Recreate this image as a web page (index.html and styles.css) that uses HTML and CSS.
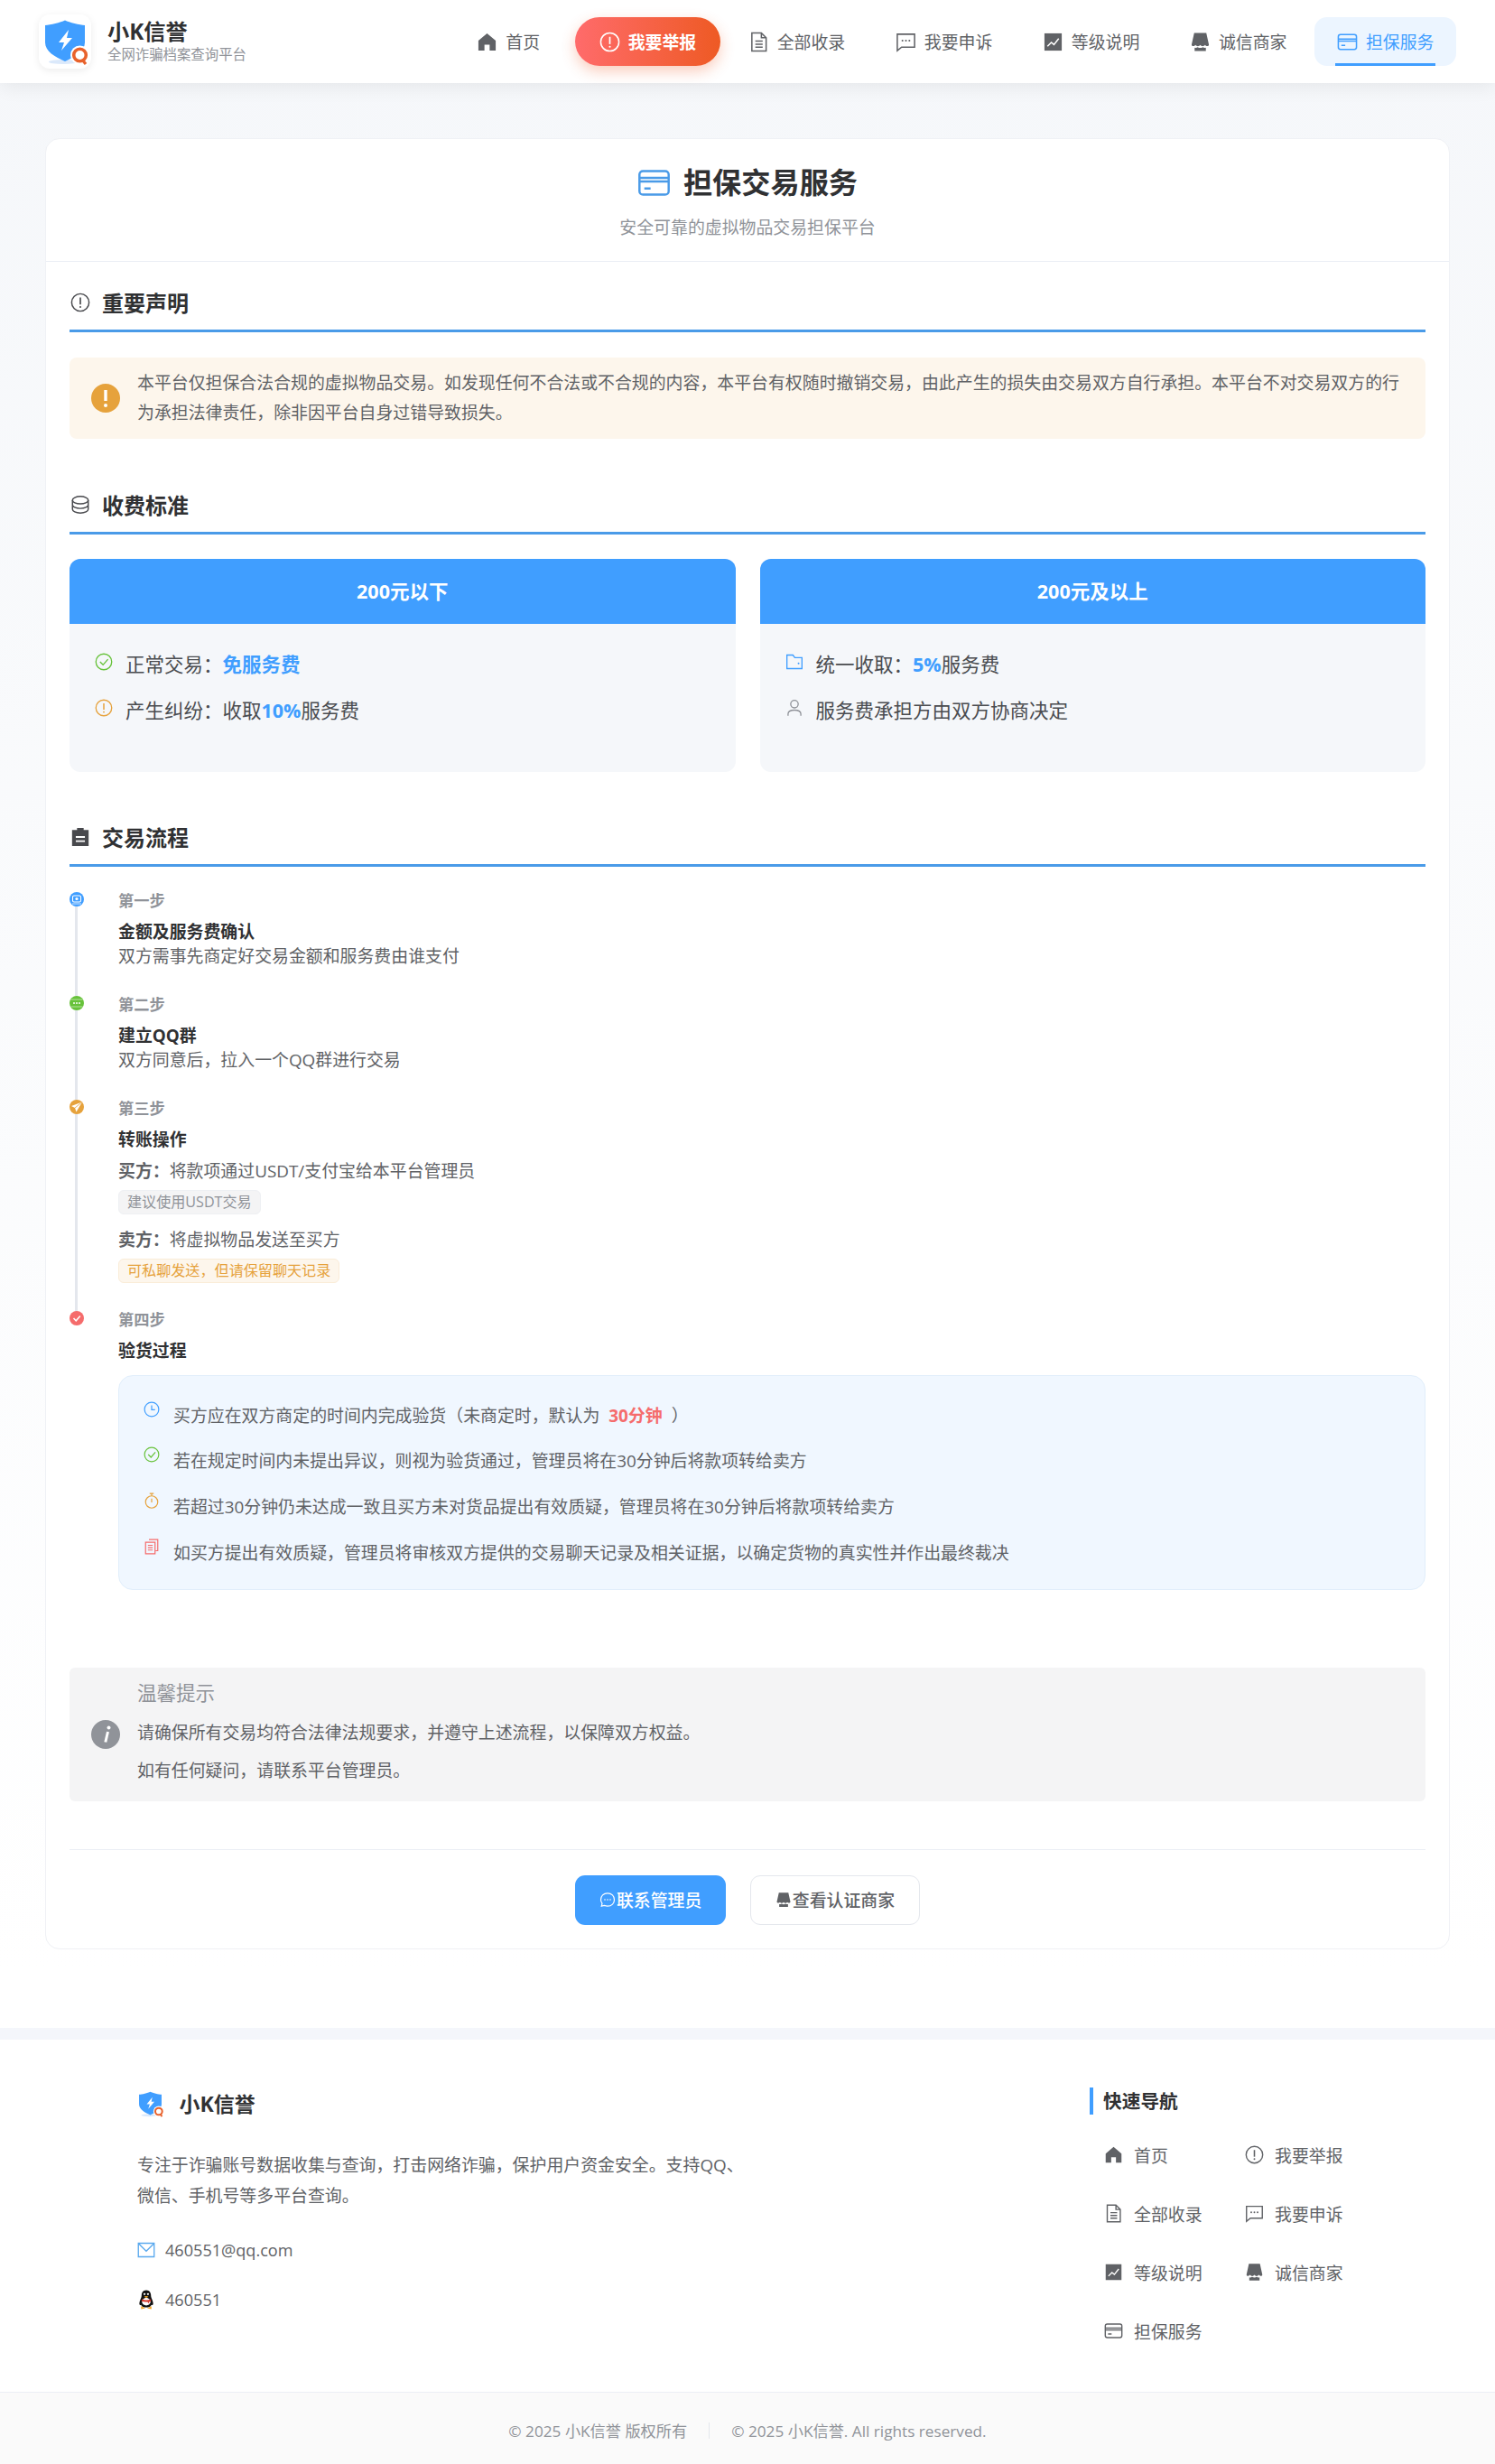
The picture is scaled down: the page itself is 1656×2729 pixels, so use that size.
FILE: index.html
```html
<!DOCTYPE html>
<html lang="zh-CN">
<head>
    <meta charset="UTF-8">
    <meta name="viewport" content="width=device-width, initial-scale=1.0">
    <title>担保交易服务 - 小K信誉</title>
    <link rel="stylesheet" href="styles.css">
</head>
<body>
    <svg class="sprite" width="0" height="0" aria-hidden="true">
        <defs>
            <symbol id="i-shield" viewBox="0 0 58 60">
                <ellipse cx="27" cy="52.5" rx="16" ry="2.5" fill="#dbe9fb"/>
                <path d="M29 6.5 C34 9 45 11.5 51 12 V31 C51 41 40 47 29 52 C18 47 7 41 7 31 V12 C13 11.5 24 9 29 6.5 Z" fill="#409eff"/>
                <path d="M33 17 L22 31 H28 L25 40 L37 26 H31 Z" fill="#fff"/>
                <circle cx="45.5" cy="45" r="10.5" fill="#fff"/>
                <circle cx="45.5" cy="45" r="6.8" fill="none" stroke="#e8622c" stroke-width="3.6"/>
                <path d="M48 50 L52 55" stroke="#e8622c" stroke-width="3.2"/>
            </symbol>
            <symbol id="i-home" viewBox="0 0 24 24">
                <path d="M12 2 L22 10.5 V22 H15 V15 H9 V22 H2 V10.5 Z" fill="currentColor"/>
            </symbol>
            <symbol id="i-alert" viewBox="0 0 24 24">
                <circle cx="12" cy="12" r="10.5" fill="none" stroke="currentColor" stroke-width="1.6"/>
                <path d="M12 6 V14.5" stroke="currentColor" stroke-width="1.8"/>
                <circle cx="12" cy="17.5" r="1.1" fill="currentColor"/>
            </symbol>
            <symbol id="i-doc" viewBox="0 0 24 24">
                <path d="M4 1.5 H15 L20.5 7 V22.5 H4 Z M15 1.5 V7 H20.5 M8 11 H16.5 M8 14.5 H16.5 M8 18 H16.5" fill="none" stroke="currentColor" stroke-width="1.6"/>
            </symbol>
            <symbol id="i-chat" viewBox="0 0 24 24">
                <path d="M2 3 H22 V18 H7 L2 22 Z" fill="none" stroke="currentColor" stroke-width="1.6"/>
                <circle cx="8" cy="10.5" r="1.1" fill="currentColor"/>
                <circle cx="12" cy="10.5" r="1.1" fill="currentColor"/>
                <circle cx="16" cy="10.5" r="1.1" fill="currentColor"/>
            </symbol>
            <symbol id="i-chart" viewBox="0 0 24 24">
                <path d="M2 2 H22 V22 H2 Z" fill="currentColor"/>
                <path d="M5.5 17 L10 12.5 L13 15 L18.5 8" fill="none" stroke="#fff" stroke-width="1.6"/>
            </symbol>
            <symbol id="i-store" viewBox="0 0 24 24">
                <path d="M5 1.5 H19 L22 15 C22 17 19 17.5 17.5 15.5 C16 17.5 13.5 17.5 12 15.5 C10.5 17.5 8 17.5 6.5 15.5 C5 17.5 2 17 2 15 Z" fill="currentColor"/>
                <path d="M5.5 18.5 C7 19 8 18.6 9 18 C11 19.2 13 19.2 15 18 C16 18.6 17 19 18.5 18.5 V22.5 H5.5 Z" fill="currentColor"/>
            </symbol>
            <symbol id="i-card" viewBox="0 0 24 24">
                <rect x="1.5" y="3.5" width="21" height="17" rx="2.5" fill="none" stroke="currentColor" stroke-width="1.6"/>
                <path d="M1.5 8.5 H22.5 M1.5 11 H22.5 M5 16 H9.5" fill="none" stroke="currentColor" stroke-width="1.6"/>
            </symbol>
            <symbol id="i-coins" viewBox="0 0 24 24">
                <ellipse cx="12" cy="6.5" rx="9.5" ry="4.5" fill="none" stroke="currentColor" stroke-width="1.6"/>
                <path d="M2.5 6.5 V17.5 C2.5 20 6.5 22 12 22 S21.5 20 21.5 17.5 V6.5 M2.5 12 C2.5 14.5 6.5 16.5 12 16.5 S21.5 14.5 21.5 12" fill="none" stroke="currentColor" stroke-width="1.6"/>
            </symbol>
            <symbol id="i-clipboard" viewBox="0 0 24 24">
                <path d="M2 3.5 H8 V1 H16 V3.5 H22 V23 H2 Z" fill="currentColor"/>
                <path d="M6.5 11 H17.5 V13 H6.5 Z M6.5 16 H17.5 V18 H6.5 Z" fill="#fff"/>
            </symbol>
            <symbol id="i-check" viewBox="0 0 24 24">
                <circle cx="12" cy="12" r="10.5" fill="none" stroke="currentColor" stroke-width="1.6"/>
                <path d="M7 12 L11 16 L17.5 8.5" fill="none" stroke="currentColor" stroke-width="1.6"/>
            </symbol>
            <symbol id="i-wallet" viewBox="0 0 24 24">
                <path d="M2 3 H10 L12.5 6.5 H22 V21 H2 Z" fill="none" stroke="currentColor" stroke-width="1.6"/>
                <circle cx="17.5" cy="14" r="1.2" fill="currentColor"/>
            </symbol>
            <symbol id="i-user" viewBox="0 0 24 24">
                <circle cx="12" cy="7" r="5" fill="none" stroke="currentColor" stroke-width="1.6"/>
                <path d="M3.5 22.5 V20 C3.5 16.5 7 15 12 15 S20.5 16.5 20.5 20 V22.5" fill="none" stroke="currentColor" stroke-width="1.6"/>
            </symbol>
            <symbol id="i-clock" viewBox="0 0 24 24">
                <circle cx="12" cy="12" r="10.5" fill="none" stroke="currentColor" stroke-width="1.6"/>
                <path d="M12 6 V12.5 H17" fill="none" stroke="currentColor" stroke-width="1.6"/>
            </symbol>
            <symbol id="i-timer" viewBox="0 0 24 24">
                <circle cx="12" cy="14" r="9" fill="none" stroke="currentColor" stroke-width="1.6"/>
                <path d="M9 1.5 H15 M12 1.5 V5 M12 9 V14.5" fill="none" stroke="currentColor" stroke-width="1.6"/>
            </symbol>
            <symbol id="i-copy" viewBox="0 0 24 24">
                <path d="M8 1.5 H21 V18 H18 M3 5.5 H17 V22.5 H3 Z M6.5 10 H13.5 M6.5 13.5 H13.5 M6.5 17 H13.5" fill="none" stroke="currentColor" stroke-width="1.6"/>
            </symbol>
            <symbol id="i-mail" viewBox="0 0 24 24">
                <path d="M1.5 3 H22.5 V21 H1.5 Z M2 3.5 L12 13.5 L22 3.5" fill="none" stroke="currentColor" stroke-width="1.6"/>
            </symbol>
        </defs>
    </svg>

    <header class="site-header">
        <a class="brand">
            <span class="brand-logo"><svg class="logo-svg"><use href="#i-shield"/></svg></span>
            <span class="brand-text">
                <span class="brand-name">小K信誉</span>
                <span class="brand-sub">全网诈骗档案查询平台</span>
            </span>
        </a>
        <nav class="main-nav">
            <a class="nav-item"><svg class="nav-icon"><use href="#i-home"/></svg>首页</a>
            <a class="nav-item nav-report"><svg class="nav-icon"><use href="#i-alert"/></svg>我要举报</a>
            <a class="nav-item"><svg class="nav-icon"><use href="#i-doc"/></svg>全部收录</a>
            <a class="nav-item"><svg class="nav-icon"><use href="#i-chat"/></svg>我要申诉</a>
            <a class="nav-item"><svg class="nav-icon"><use href="#i-chart"/></svg>等级说明</a>
            <a class="nav-item"><svg class="nav-icon"><use href="#i-store"/></svg>诚信商家</a>
            <a class="nav-item nav-active"><svg class="nav-icon"><use href="#i-card"/></svg>担保服务</a>
        </nav>
    </header>

    <main class="page">
        <div class="card">
            <div class="card-head">
                <h1 class="page-title"><svg class="title-icon"><use href="#i-card"/></svg>担保交易服务</h1>
                <p class="page-sub">安全可靠的虚拟物品交易担保平台</p>
            </div>

            <div class="card-body">
                <section class="section">
                    <h2 class="section-title"><svg class="section-icon"><use href="#i-alert"/></svg>重要声明</h2>
                    <div class="notice">
                        <svg class="notice-icon" viewBox="0 0 32 32"><circle cx="16" cy="16" r="16" fill="#e6a23c"/><path d="M16 7 V19" stroke="#fff" stroke-width="3.4"/><circle cx="16" cy="24" r="2" fill="#fff"/></svg>
                        <p>本平台仅担保合法合规的虚拟物品交易。如发现任何不合法或不合规的内容，本平台有权随时撤销交易，由此产生的损失由交易双方自行承担。本平台不对交易双方的行为承担法律责任，除非因平台自身过错导致损失。</p>
                    </div>
                </section>

                <section class="section section-next">
                    <h2 class="section-title"><svg class="section-icon"><use href="#i-coins"/></svg>收费标准</h2>
                    <div class="fee-grid">
                        <div class="fee-card">
                            <div class="fee-head">200元以下</div>
                            <ul class="fee-list">
                                <li><svg class="fee-icon green"><use href="#i-check"/></svg><span>正常交易：<b>免服务费</b></span></li>
                                <li><svg class="fee-icon orange"><use href="#i-alert"/></svg><span>产生纠纷：收取<b>10%</b>服务费</span></li>
                            </ul>
                        </div>
                        <div class="fee-card">
                            <div class="fee-head">200元及以上</div>
                            <ul class="fee-list">
                                <li><svg class="fee-icon blue"><use href="#i-wallet"/></svg><span>统一收取：<b>5%</b>服务费</span></li>
                                <li><svg class="fee-icon grey"><use href="#i-user"/></svg><span>服务费承担方由双方协商决定</span></li>
                            </ul>
                        </div>
                    </div>
                </section>

                <section class="section section-next">
                    <h2 class="section-title"><svg class="section-icon"><use href="#i-clipboard"/></svg>交易流程</h2>
                    <div class="timeline">
                        <div class="step">
                            <svg class="dot" viewBox="0 0 16 16"><circle cx="8" cy="8" r="8" fill="#409eff"/><rect x="3.5" y="4" width="9" height="7" rx="1.5" fill="none" stroke="#fff" stroke-width="1.1"/><circle cx="8" cy="7.5" r="1.6" fill="#fff"/><path d="M3 13 H13" stroke="#cfe5ff" stroke-width="1"/></svg>
                            <div class="step-label">第一步</div>
                            <div class="step-title">金额及服务费确认</div>
                            <div class="step-desc">双方需事先商定好交易金额和服务费由谁支付</div>
                        </div>
                        <div class="step">
                            <svg class="dot" viewBox="0 0 16 16"><circle cx="8" cy="8" r="8" fill="#67c23a"/><path d="M1.5 4 H14.5 M1.5 12 H14.5" stroke="#b5e29c" stroke-width="1"/><circle cx="5" cy="8" r="1" fill="#fff"/><circle cx="8" cy="8" r="1" fill="#fff"/><circle cx="11" cy="8" r="1" fill="#fff"/></svg>
                            <div class="step-label">第二步</div>
                            <div class="step-title">建立QQ群</div>
                            <div class="step-desc">双方同意后，拉入一个QQ群进行交易</div>
                        </div>
                        <div class="step">
                            <svg class="dot" viewBox="0 0 16 16"><circle cx="8" cy="8" r="8" fill="#e6a23c"/><path d="M14 2.5 L2 7 L6 9 L7.5 13.5 Z" fill="#fff"/><path d="M6 9 L14 2.5" stroke="#e6a23c" stroke-width="0.8"/></svg>
                            <div class="step-label">第三步</div>
                            <div class="step-title">转账操作</div>
                            <div class="party"><b>买方：</b>将款项通过USDT/支付宝给本平台管理员</div>
                            <div class="tag">建议使用USDT交易</div>
                            <div class="party party-next"><b>卖方：</b>将虚拟物品发送至买方</div>
                            <div class="tag tag-warn">可私聊发送，但请保留聊天记录</div>
                        </div>
                        <div class="step step-last">
                            <svg class="dot" viewBox="0 0 16 16"><circle cx="8" cy="8" r="8" fill="#f56c6c"/><path d="M4.5 8 L7.2 10.8 L11.8 5.5" fill="none" stroke="#fff" stroke-width="1.5"/></svg>
                            <div class="step-label">第四步</div>
                            <div class="step-title">验货过程</div>
                            <ul class="check-box">
                                <li><svg class="check-icon blue"><use href="#i-clock"/></svg><span>买方应在双方商定的时间内完成验货（未商定时，默认为<strong>30分钟</strong>）</span></li>
                                <li><svg class="check-icon green"><use href="#i-check"/></svg><span>若在规定时间内未提出异议，则视为验货通过，管理员将在30分钟后将款项转给卖方</span></li>
                                <li><svg class="check-icon orange"><use href="#i-timer"/></svg><span>若超过30分钟仍未达成一致且买方未对货品提出有效质疑，管理员将在30分钟后将款项转给卖方</span></li>
                                <li><svg class="check-icon red"><use href="#i-copy"/></svg><span>如买方提出有效质疑，管理员将审核双方提供的交易聊天记录及相关证据，以确定货物的真实性并作出最终裁决</span></li>
                            </ul>
                        </div>
                    </div>
                </section>

                <div class="tip">
                    <svg class="tip-icon" viewBox="0 0 32 32"><circle cx="16" cy="16" r="16" fill="#909399"/><path d="M18.5 13 L15.8 24.5" stroke="#fff" stroke-width="3"/><circle cx="19.5" cy="8.5" r="2" fill="#fff"/></svg>
                    <div class="tip-text">
                        <div class="tip-title">温馨提示</div>
                        <p class="tip-first">请确保所有交易均符合法律法规要求，并遵守上述流程，以保障双方权益。</p>
                        <p>如有任何疑问，请联系平台管理员。</p>
                    </div>
                </div>

                <div class="actions">
                    <a class="btn btn-primary"><svg class="btn-icon" viewBox="0 0 24 24"><path d="M12 2.5 C18 2.5 22 6.5 22 12 S18 21.5 12 21.5 C10 21.5 8.5 21 7 20.5 L3 21.5 L4 17.5 C2.8 16 2 14 2 12 C2 6.5 6 2.5 12 2.5 Z" fill="none" stroke="currentColor" stroke-width="1.6"/><circle cx="8" cy="12" r="1.1" fill="currentColor"/><circle cx="12" cy="12" r="1.1" fill="currentColor"/><circle cx="16" cy="12" r="1.1" fill="currentColor"/></svg>联系管理员</a>
                    <a class="btn btn-plain"><svg class="btn-icon"><use href="#i-store"/></svg>查看认证商家</a>
                </div>
            </div>
        </div>
    </main>

    <footer class="site-footer">
        <div class="footer-main">
            <div class="footer-about">
                <div class="footer-brand"><svg class="footer-logo"><use href="#i-shield"/></svg>小K信誉</div>
                <p class="footer-desc">专注于诈骗账号数据收集与查询，打击网络诈骗，保护用户资金安全。支持QQ、微信、手机号等多平台查询。</p>
                <div class="contact"><svg class="contact-icon mail"><use href="#i-mail"/></svg>460551@qq.com</div>
                <div class="contact">
                    <svg class="contact-icon" viewBox="3 0.5 18 23">
                        <path d="M12 1 C7.5 1 6.5 5 6.5 8 C6.5 10 4 13 4 16.5 C4 18 5 19 6 18 C7 20.5 9 21 12 21 S17 20.5 18 18 C19 19 20 18 20 16.5 C20 13 17.5 10 17.5 8 C17.5 5 16.5 1 12 1 Z" fill="#111"/>
                        <path d="M12 10 C9 10 8 12 7 15 C8 20 16 20 17 15 C16 12 15 10 12 10 Z" fill="#fff"/>
                        <path d="M7 11.5 C10 13 14 13 17 11.5 L17.5 14 L15 14.5 L15.5 17 L13.5 14.5 C11 15 8.5 14.5 6.5 13.5 Z" fill="#d8382c"/>
                        <path d="M9.5 8.5 C11 7.5 13 7.5 14.5 8.5 L12 10 Z" fill="#f5a623"/>
                        <circle cx="10" cy="5.5" r="1.2" fill="#fff"/><circle cx="14" cy="5.5" r="1.2" fill="#fff"/>
                        <path d="M6 19.5 L11 22 L6 23 Z M18 19.5 L13 22 L18 23 Z" fill="#f5a623"/>
                    </svg>460551
                </div>
            </div>
            <div class="footer-nav">
                <h3 class="footer-nav-title">快速导航</h3>
                <div class="footer-links">
                    <a class="footer-link"><svg class="link-icon"><use href="#i-home"/></svg>首页</a>
                    <a class="footer-link"><svg class="link-icon"><use href="#i-alert"/></svg>我要举报</a>
                    <a class="footer-link"><svg class="link-icon"><use href="#i-doc"/></svg>全部收录</a>
                    <a class="footer-link"><svg class="link-icon"><use href="#i-chat"/></svg>我要申诉</a>
                    <a class="footer-link"><svg class="link-icon"><use href="#i-chart"/></svg>等级说明</a>
                    <a class="footer-link"><svg class="link-icon"><use href="#i-store"/></svg>诚信商家</a>
                    <a class="footer-link"><svg class="link-icon"><use href="#i-card"/></svg>担保服务</a>
                </div>
            </div>
        </div>
        <div class="footer-bottom">
            <span>© 2025 小K信誉 版权所有</span>
            <span class="footer-sep"></span>
            <span>© 2025 小K信誉. All rights reserved.</span>
        </div>
    </footer>
</body>
</html>
```

FILE: styles.css
```css
:root {
    --primary: #409eff;
    --line-blue: #4a9be8;
    --text: #303133;
    --text-2: #606266;
    --text-3: #909399;
    --border: #ebeef5;
    --green: #67c23a;
    --orange: #e6a23c;
    --red: #f56c6c;
}

* {
    box-sizing: border-box;
}

html, body {
    margin: 0;
    padding: 0;
}

body {
    font-family: "Open Sans", "Noto Sans CJK SC", sans-serif;
    background: linear-gradient(180deg, #f5f7fa 0%, #ffffff 80%);
    color: var(--text);
    font-size: 18.9px;
}

.sprite {
    position: absolute;
}

p, h1, h2, h3, ul {
    margin: 0;
    padding: 0;
}

ul {
    list-style: none;
}

b, strong {
    font-weight: 700;
}

/* header */
.site-header {
    height: 92px;
    padding: 0 43px;
    background: #fff;
    box-shadow: 0 4px 20px rgba(0, 0, 0, 0.07);
    display: flex;
    justify-content: space-between;
    align-items: center;
}

.brand {
    display: flex;
    align-items: center;
    gap: 18px;
}

.brand-logo {
    width: 58px;
    height: 60px;
    border-radius: 12px;
    background: #fff;
    box-shadow: 0 2px 8px rgba(0, 0, 0, 0.08);
}

.logo-svg {
    display: block;
    width: 58px;
    height: 60px;
}

.brand-text {
    margin-top: -2px;
    display: flex;
    flex-direction: column;
}

.brand-name {
    font-size: 24.2px;
    font-weight: 700;
    line-height: 32px;
}

.brand-sub {
    font-size: 15.4px;
    line-height: 20px;
    color: var(--text-3);
}

.main-nav {
    display: flex;
    align-items: center;
    gap: 6.5px;
}

.nav-item {
    height: 54px;
    padding: 0 24.5px;
    border-radius: 14px;
    display: flex;
    align-items: center;
    gap: 9px;
    color: var(--text-2);
    position: relative;
}

.nav-icon {
    width: 23px;
    height: 23px;
}

.nav-report {
    margin-left: 8px;
    padding: 0 26.5px;
    border-radius: 27px;
    color: #fff;
    font-weight: 700;
    background: linear-gradient(90deg, #ff6b6b, #ee5a24);
    box-shadow: 0 6px 16px rgba(238, 90, 36, 0.3);
}

.nav-active {
    color: var(--primary);
    background: #ecf5ff;
}

.nav-active::after {
    content: "";
    position: absolute;
    left: 23px;
    right: 23px;
    bottom: 0;
    height: 3px;
    background: var(--primary);
}

/* main card */
.page {
    padding: 61px 50px 0;
}

.card {
    background: #fff;
    border: 1px solid #eff1f5;
    border-radius: 16px;
}

.card-head {
    height: 136px;
    border-bottom: 1px solid var(--border);
    text-align: center;
    padding-top: 23px;
}

.page-title {
    font-size: 32.2px;
    font-weight: 700;
    line-height: 50px;
    display: flex;
    justify-content: center;
    align-items: center;
    gap: 14px;
}

.title-icon {
    width: 37px;
    height: 37px;
    color: var(--line-blue);
}

.page-sub {
    margin-top: 11px;
    line-height: 28px;
    color: var(--text-3);
}

.card-body {
    padding: 0 26px 26px;
}

.section-title {
    height: 78px;
    padding-top: 28px;
    border-bottom: 3px solid var(--line-blue);
    font-size: 24px;
    font-weight: 700;
    line-height: 36px;
    display: flex;
    align-items: flex-start;
    gap: 13px;
}

.section-icon {
    margin: 6px 0 0 1px;
    width: 22px;
    height: 22px;
    color: #48494d;
}

.section-next {
    margin-top: 27.5px;
}

/* notice */
.notice {
    margin-top: 28px;
    height: 90px;
    border-radius: 8px;
    background: #fdf6ec;
    padding: 0 24px;
    display: flex;
    align-items: center;
    gap: 19px;
    color: var(--text-2);
    line-height: 33px;
}

.notice-icon {
    flex: none;
    width: 32px;
    height: 32px;
}

/* fees */
.fee-grid {
    margin-top: 27px;
    display: grid;
    grid-template-columns: 1fr 1fr;
    gap: 27px;
}

.fee-card {
    height: 236px;
    border-radius: 12px;
    background: #f5f7fa;
    overflow: hidden;
}

.fee-head {
    height: 72px;
    line-height: 72px;
    background: var(--primary);
    color: #fff;
    text-align: center;
    font-size: 21.5px;
    font-weight: 700;
}

.fee-list {
    padding: 18px 28px 0;
    font-size: 21.5px;
    color: #4a4c50;
}

.fee-list li {
    height: 51px;
    display: flex;
    align-items: center;
    gap: 14px;
}

.fee-list b {
    color: var(--primary);
}

.fee-icon {
    flex: none;
    width: 20px;
    height: 20px;
    margin-top: -3px;
}

.green { color: var(--green); }
.orange { color: var(--orange); }
.blue { color: var(--primary); }
.red { color: var(--red); }
.grey { color: var(--text-3); }

/* timeline */
.timeline {
    margin-top: 25.5px;
}

.step {
    position: relative;
    padding-left: 54px;
    padding-bottom: 29px;
}

.step::before {
    content: "";
    position: absolute;
    left: 6px;
    top: 10px;
    bottom: -10px;
    width: 3px;
    background: #e4e7ed;
}

.step-last::before {
    display: none;
}

.dot {
    position: absolute;
    left: 0;
    top: 2px;
    width: 16px;
    height: 16px;
    z-index: 1;
}

.step-label {
    font-size: 17.25px;
    line-height: 24px;
    font-weight: 600;
    color: var(--text-3);
}

.step-title {
    margin-top: 8px;
    font-weight: 700;
    line-height: 28px;
}

.step-desc {
    line-height: 26px;
    color: var(--text-2);
}

.party {
    margin-top: 7px;
    line-height: 28px;
    color: var(--text-2);
}

.party-next {
    margin-top: 14px;
}

.tag {
    width: fit-content;
    margin-top: 7px;
    height: 27px;
    padding: 0 9px;
    border-radius: 6px;
    font-size: 16.1px;
    line-height: 25px;
    background: #f4f4f5;
    border: 1px solid #eef0f3;
    color: var(--text-3);
}

.tag-warn {
    background: #fdf6ec;
    border-color: #faecd8;
    color: var(--orange);
}

.check-box {
    margin-top: 13px;
    padding: 18px 27px 16px;
    background: #f0f7ff;
    border: 1px solid #e1eefb;
    border-radius: 16px;
    color: var(--text-2);
}

.check-box li {
    height: 50.6px;
    display: flex;
    align-items: center;
    gap: 15px;
}

.check-box strong {
    color: var(--red);
    padding: 0 10px;
}

.check-icon {
    flex: none;
    width: 18px;
    height: 18px;
    margin-top: -12px;
}

/* tip */
.tip {
    margin-top: 57px;
    height: 148px;
    background: #f4f4f5;
    border-radius: 6px;
    padding: 0 24px;
    display: flex;
    align-items: center;
    gap: 19px;
    color: var(--text-2);
}

.tip-icon {
    flex: none;
    width: 32px;
    height: 32px;
}

.tip-title {
    font-size: 21.5px;
    line-height: 30px;
    color: var(--text-3);
}

.tip-text p {
    line-height: 42px;
}

.tip-first {
    margin-top: 8px;
}

.actions {
    margin-top: 53px;
    border-top: 1px solid var(--border);
    padding-top: 28px;
    display: flex;
    justify-content: center;
    gap: 27px;
}

.btn {
    height: 55px;
    padding: 0 26.7px;
    border-radius: 11px;
    display: flex;
    align-items: center;
    gap: 1px;
    font-weight: 500;
}

.btn-primary {
    background: var(--primary);
    color: #fff;
}

.btn-plain {
    background: #fff;
    color: var(--text-2);
    border: 1px solid #e4e7ed;
}

.btn-icon {
    width: 18px;
    height: 18px;
}

/* footer */
.site-footer {
    margin-top: 87.5px;
    background: #fff;
    border-top: 13px solid #f4f6fb;
}

.footer-main {
    height: 390px;
    padding: 54px 0 0 152px;
    display: flex;
}

.footer-about {
    width: 690px;
}

.footer-brand {
    font-size: 23px;
    font-weight: 700;
    line-height: 34px;
    display: flex;
    align-items: center;
    gap: 15.6px;
}

.footer-logo {
    margin-left: -2px;
    width: 33px;
    height: 34px;
}

.footer-desc {
    margin-top: 33.7px;
    line-height: 34px;
    color: var(--text-2);
}

.contact {
    margin-top: 29.5px;
    line-height: 26px;
    display: flex;
    align-items: center;
    gap: 11px;
    font-size: 18.1px;
    color: var(--text-2);
}

.contact-icon {
    flex: none;
    width: 20px;
    height: 22px;
}

.mail {
    color: #5aa9ee;
}

.footer-nav {
    margin: -1px 0 0 365px;
}

.footer-nav-title {
    font-size: 20.7px;
    font-weight: 700;
    line-height: 30px;
    padding-left: 11px;
    border-left: 4px solid var(--primary);
}

.footer-links {
    margin-top: 12px;
    padding-left: 16px;
    display: grid;
    grid-template-columns: 156px 156px;
}

.footer-link {
    height: 65px;
    display: flex;
    align-items: center;
    gap: 12px;
    color: var(--text-2);
}

.link-icon {
    width: 21px;
    height: 21px;
}

.footer-bottom {
    height: 81px;
    padding-top: 3px;
    background: #fafafa;
    border-top: 1px solid var(--border);
    display: flex;
    justify-content: center;
    align-items: center;
    gap: 24px;
    font-size: 17.2px;
    color: var(--text-3);
}

.footer-sep {
    width: 1px;
    height: 18px;
    background: #e4e7ed;
}
```
